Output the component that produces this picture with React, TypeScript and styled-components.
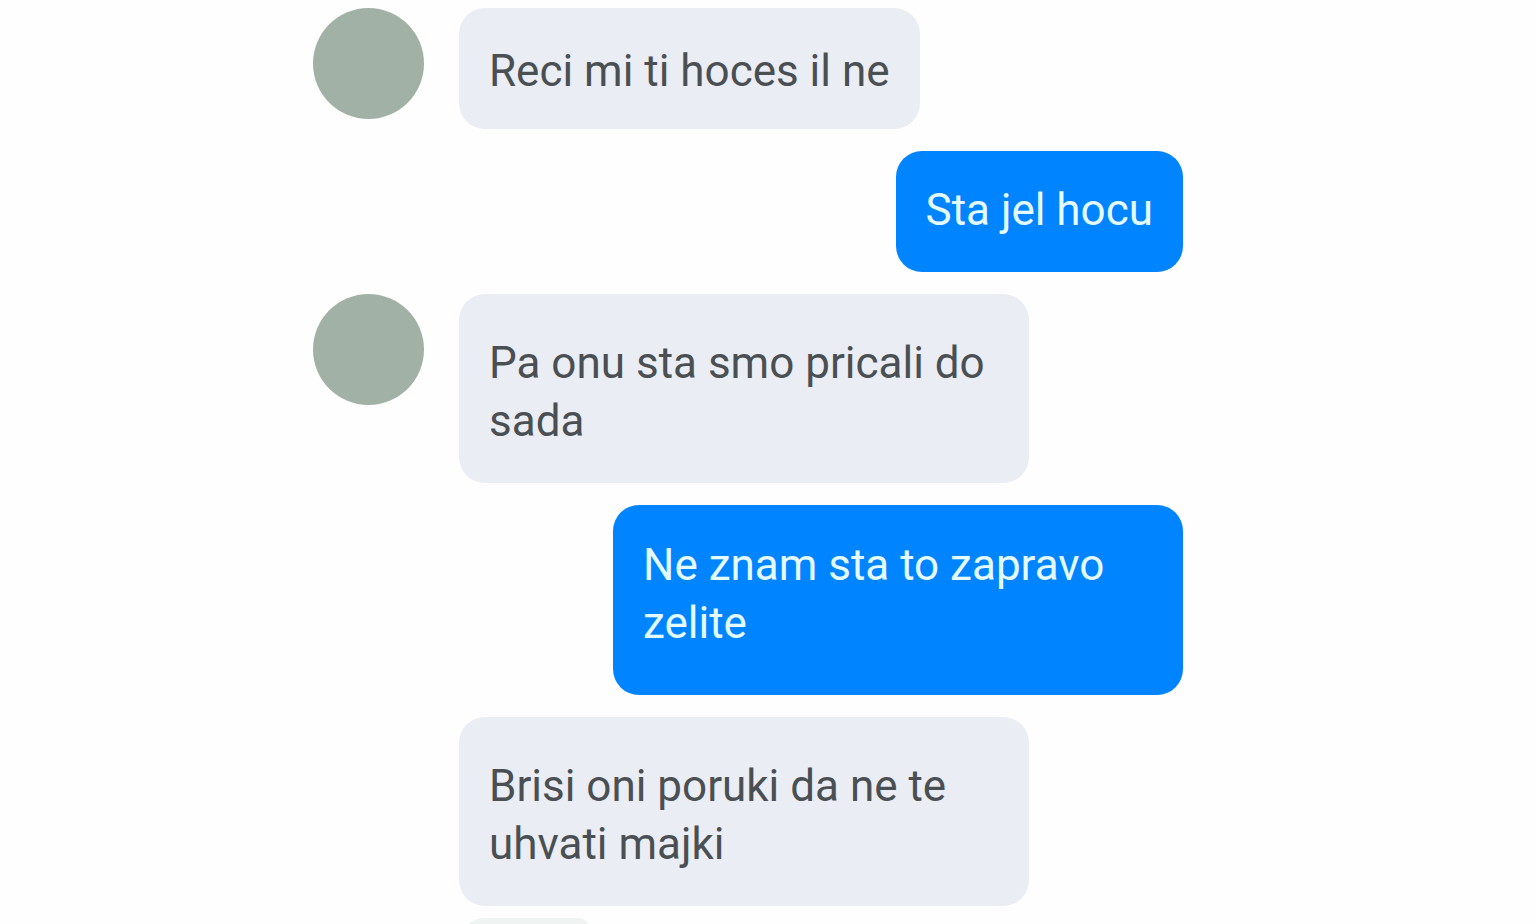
import React from "react";
import styled, { createGlobalStyle } from "styled-components";

type Sender = "them" | "me";

interface Message {
  sender: Sender;
  text: string;
  avatar?: boolean;
  long?: boolean;
}

const messages: Message[] = [
  { sender: "them", text: "Reci mi ti hoces il ne", avatar: true },
  { sender: "me", text: "Sta jel hocu" },
  { sender: "them", text: "Pa onu sta smo pricali do sada", avatar: true, long: true },
  { sender: "me", text: "Ne znam sta to zapravo zelite", long: true },
  { sender: "them", text: "Brisi oni poruki da ne te uhvati majki", long: true },
];

const bubblePadding = {
  them: { short: "34px 30px 29px", long: "40px 30px 33px" },
  me: { short: "30px 30px 33px", long: "31px 30px 43px" },
};

const GlobalStyle = createGlobalStyle`
  * { box-sizing: border-box; }
  body {
    margin: 0;
    background: #fefefe;
    font-family: Roboto, "Liberation Sans", sans-serif;
  }
`;

const Chat = styled.main`
  display: flex;
  flex-direction: column;
  gap: 12px;
  width: 100%;
  max-width: 940px;
  height: 100vh;
  margin: 0 auto;
  padding: 8px 55px 0 15px;
  overflow: hidden;
`;

const Thread = styled.ul`
  display: flex;
  flex: none;
  flex-direction: column;
  gap: 22px;
  margin: 0;
  padding: 0;
  list-style: none;
`;

const Row = styled.li<{ $sender: Sender }>`
  display: flex;
  align-items: flex-start;
  justify-content: ${({ $sender }) => ($sender === "me" ? "flex-end" : "flex-start")};
`;

const AvatarSlot = styled.div`
  flex: none;
  width: 146px;
`;

const Avatar = styled.div`
  width: 111px;
  height: 111px;
  border-radius: 50%;
  background: #a2b1a6;
`;

const Bubble = styled.p<{ $sender: Sender; $long: boolean }>`
  max-width: 570px;
  margin: 0;
  padding: ${({ $sender, $long }) => bubblePadding[$sender][$long ? "long" : "short"]};
  border-radius: 26px;
  background: ${({ $sender }) => ($sender === "me" ? "#0084ff" : "#eaedf3")};
  color: ${({ $sender }) => ($sender === "me" ? "#e4fbff" : "#4a4f53")};
  font-size: 44px;
  line-height: 58px;
`;

const NextRow = styled.div`
  display: flex;
  flex: none;
`;

const NextBubble = styled.div`
  width: 130px;
  height: 58px;
  border-radius: 26px 10px 10px 26px;
  background: #eff3f1;
`;

export default function App() {
  return (
    <>
      <GlobalStyle />
      <Chat>
        <Thread>
          {messages.map(({ sender, text, avatar, long }) => (
            <Row key={text} $sender={sender}>
              {sender === "them" && <AvatarSlot>{avatar && <Avatar />}</AvatarSlot>}
              <Bubble $sender={sender} $long={Boolean(long)}>
                {text}
              </Bubble>
            </Row>
          ))}
        </Thread>
        <NextRow>
          <AvatarSlot />
          <NextBubble />
        </NextRow>
      </Chat>
    </>
  );
}
